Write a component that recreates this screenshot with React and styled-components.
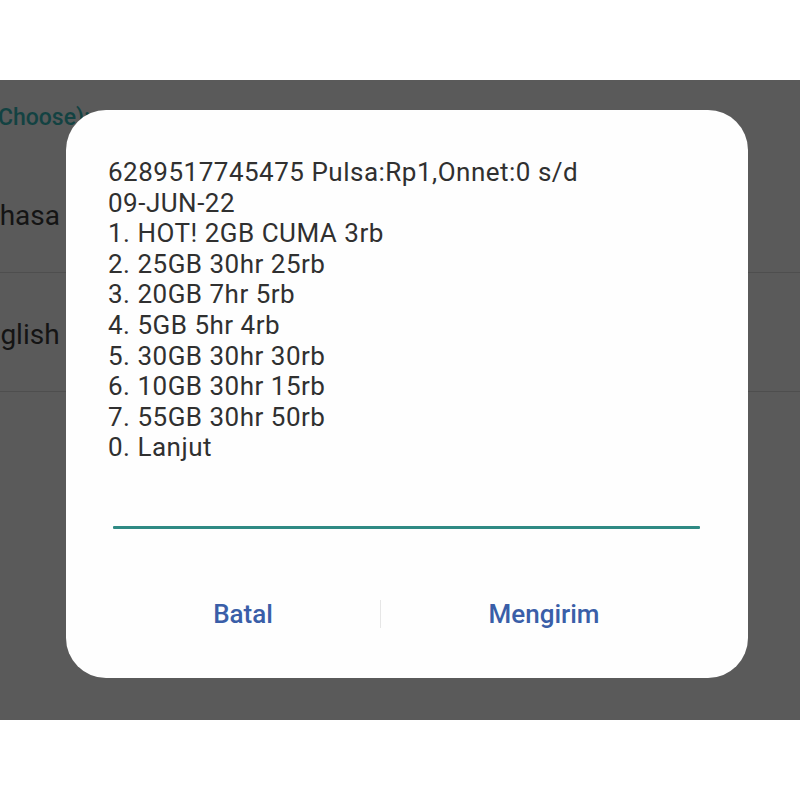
import React from 'react';
import styled, { createGlobalStyle } from 'styled-components';

const lines = [
  '6289517745475 Pulsa:Rp1,Onnet:0 s/d',
  '09-JUN-22',
  '1. HOT! 2GB CUMA 3rb',
  '2. 25GB 30hr 25rb',
  '3. 20GB 7hr 5rb',
  '4. 5GB 5hr 4rb',
  '5. 30GB 30hr 30rb',
  '6. 10GB 30hr 15rb',
  '7. 55GB 30hr 50rb',
  '0. Lanjut',
];

const languages = [
  { label: 'Bahasa Indonesia', shift: 33 },
  { label: 'English', shift: 31 },
];

const App = () => (
  <>
    <GlobalStyle />
    <Page>
      <TopBar />
      <Screen>
        <LanguageList>
          <ListHeader>(Choose):</ListHeader>
          {languages.map((lang) => (
            <LanguageRow key={lang.label}>
              <LanguageLabel $shift={lang.shift}>{lang.label}</LanguageLabel>
            </LanguageRow>
          ))}
        </LanguageList>

        <Dialog>
          <Message>
            {lines.map((line, i) => (
              <Line key={i}>{line}</Line>
            ))}
          </Message>
          <ReplyInput aria-label="reply" />
          <Actions>
            <ActionButton>Batal</ActionButton>
            <ActionDivider />
            <ActionButton>Mengirim</ActionButton>
          </Actions>
        </Dialog>
      </Screen>
      <BottomBar />
    </Page>
  </>
);

const GlobalStyle = createGlobalStyle`
  html, body {
    margin: 0;
    padding: 0;
    background: #fff;
    font-family: Roboto, "Noto Sans", sans-serif;
  }
`;

const Page = styled.div`
  width: 800px;
  height: 800px;
  display: flex;
  flex-direction: column;
  overflow: hidden;
`;

const TopBar = styled.div`
  height: 80px;
  background: #fff;
`;

const BottomBar = styled.div`
  flex: 1;
  background: #fff;
`;

const Screen = styled.div`
  position: relative;
  height: 640px;
  background: #5a5a5a;
  overflow: hidden;
`;

const LanguageList = styled.div`
  display: flex;
  flex-direction: column;
`;

const ListHeader = styled.div`
  height: 74px;
  display: flex;
  align-items: center;
  margin-left: -10px;
  font-size: 23px;
  font-weight: 500;
  color: #134242;
  white-space: nowrap;
`;

const LanguageRow = styled.div`
  height: 118px;
  display: flex;
  align-items: center;
  border-bottom: 1px solid #4e4e4e;
`;

const LanguageLabel = styled.span`
  margin-left: -${(p) => p.$shift}px;
  margin-top: 4px;
  font-size: 28px;
  color: #141414;
  white-space: nowrap;
`;

const Dialog = styled.div`
  position: absolute;
  top: 30px;
  left: 66px;
  width: 682px;
  height: 568px;
  box-sizing: border-box;
  background: #fefefe;
  border-radius: 40px;
  padding: 47px 0 0 42px;
  display: flex;
  flex-direction: column;
`;

const Message = styled.div`
  font-size: 26px;
  letter-spacing: 0.5px;
  line-height: 30.6px;
  color: #303030;
`;

const Line = styled.div`
  white-space: nowrap;
`;

const ReplyInput = styled.div`
  margin: 63px 0 0 5px;
  width: 587px;
  height: 3px;
  background: #2f8a84;
  border-radius: 1px;
`;

const Actions = styled.div`
  margin: 70px 0 0 -2px;
  display: grid;
  grid-template-columns: 274px 1px 326px;
  align-items: center;
  height: 30px;
`;

const ActionButton = styled.div`
  text-align: center;
  font-size: 26px;
  font-weight: 500;
  color: #3a5ea8;
`;

const ActionDivider = styled.div`
  height: 28px;
  background: #e6e6e6;
`;

export default App;
